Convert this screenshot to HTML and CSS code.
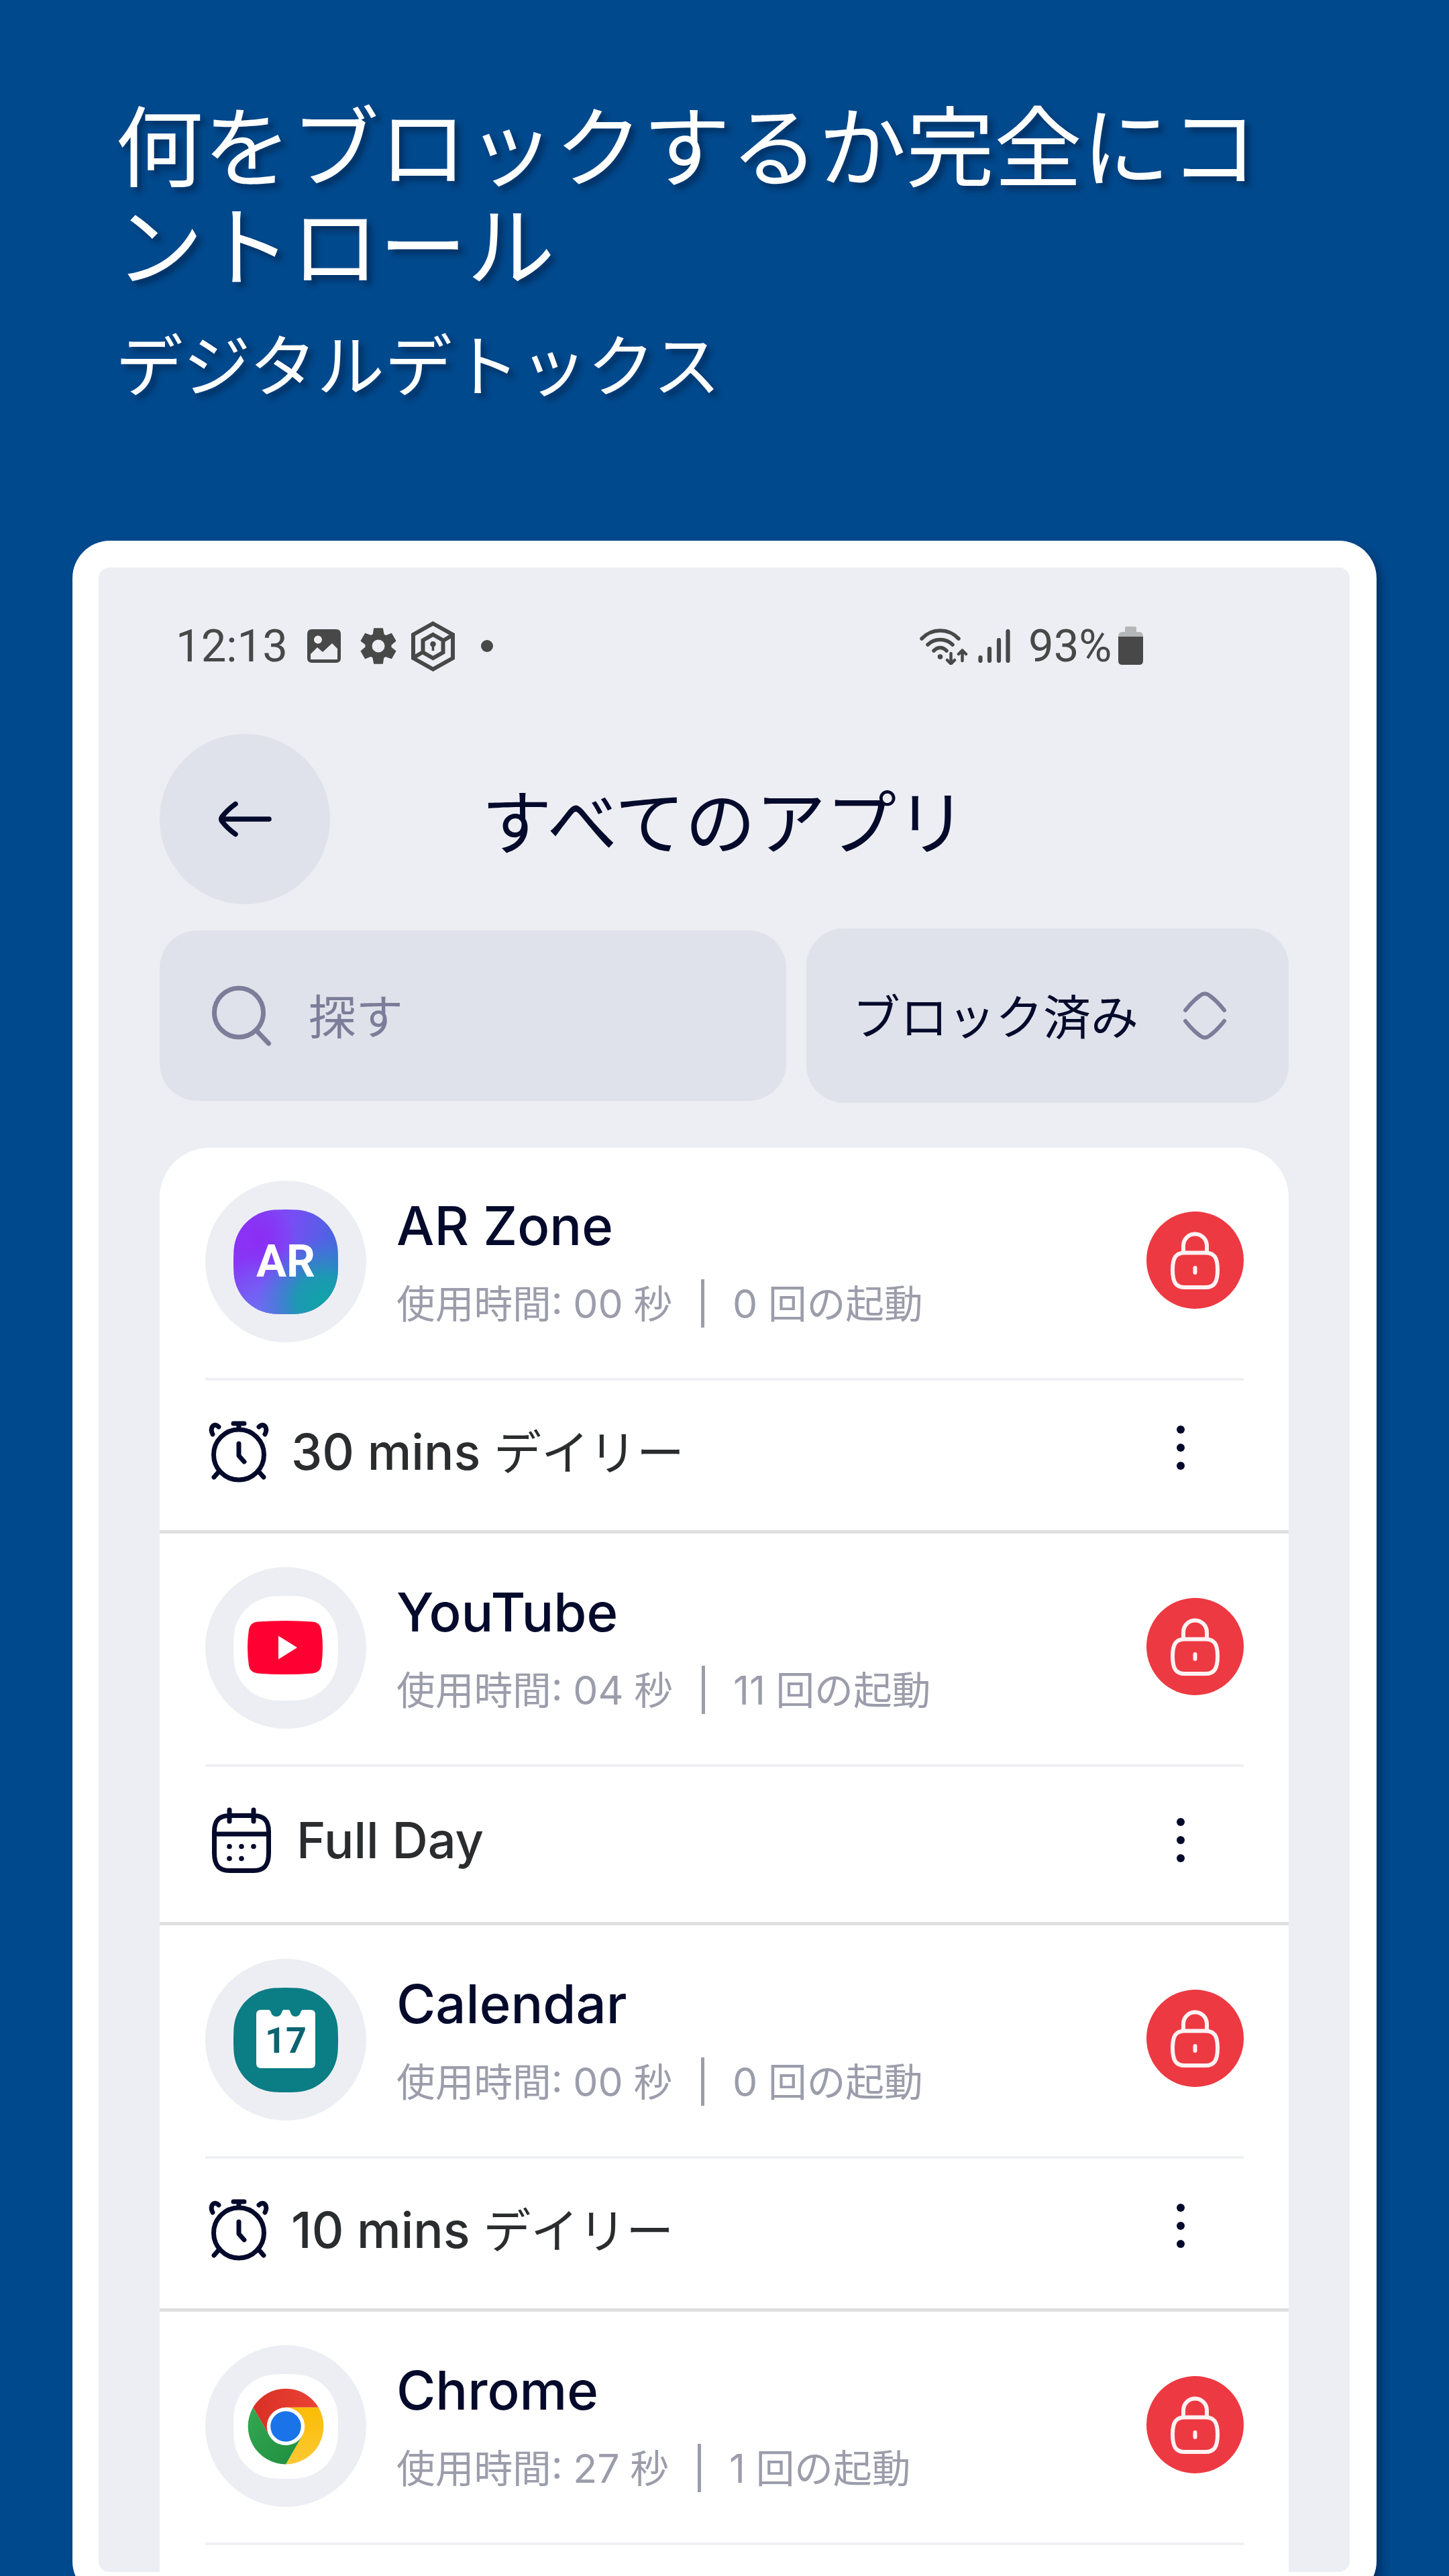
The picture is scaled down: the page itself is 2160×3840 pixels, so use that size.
FILE: index.html
```html
<!DOCTYPE html>
<html lang="ja">
<head>
<meta charset="utf-8">
<title>デジタルデトックス</title>
<link rel="stylesheet" href="styles.css">
</head>
<body>
<svg class="defs" width="0" height="0" aria-hidden="true">
  <symbol id="squircle" viewBox="0 0 156 156"><path d="M60 .500Q78-.500 96 .500C128 3 153 28 155.500 60Q156.500 78 155.500 96C153 128 128 153 96 155.500Q78 156.500 60 155.500C28 153 3 128 .500 96Q-.500 78 .500 60C3 28 28 3 60 .500Z"/></symbol>
  <symbol id="lock" viewBox="0 0 145 145">
    <g fill="none" stroke="#fff2f3" stroke-width="6" stroke-linecap="round">
      <path d="M55 61V51a17.500 17.500 0 0 1 35 0v10"/>
      <path d="M57 61.500h31c13 0 18 7 18 25.500s-5 26-18 26H57c-13 0-18-7.500-18-26s5-25.500 18-25.500Z"/>
      <path d="M72.500 84v7"/>
    </g>
  </symbol>
  <symbol id="alarm" viewBox="0 0 90 92">
    <g fill="none" stroke="#040a2b" stroke-width="7" stroke-linecap="round" stroke-linejoin="round">
      <circle cx="45" cy="50.500" r="37.500"/>
      <path d="M45 34v18l8 9M37 4h16M45 4v8M6 20C1 10 8 2 15 9M84 20c5-10-2-18-9-11M15 76l-7 8M75 76l7 8"/>
    </g>
  </symbol>
  <symbol id="calendar" viewBox="0 0 88 98">
    <g fill="none" stroke="#040a2b" stroke-width="7" stroke-linecap="round">
      <path d="M26 12.500h36c16 0 22.500 8 22.500 24v32c0 18-6.500 26-22.500 26H26c-16 0-22.500-8-22.500-26v-32c0-16 6.500-24 22.500-24ZM3.500 40h81M26 4v17M62 4v17"/>
    </g>
    <g fill="#040a2b"><circle cx="26" cy="58.500" r="3.800"/><circle cx="44" cy="58.500" r="3.800"/><circle cx="62" cy="58.500" r="3.800"/><circle cx="26" cy="76.500" r="3.800"/><circle cx="44" cy="76.500" r="3.800"/></g>
  </symbol>
  <symbol id="more" viewBox="0 0 12 66"><g fill="#040a2b"><circle cx="6" cy="6" r="6"/><circle cx="6" cy="33" r="6"/><circle cx="6" cy="60" r="6"/></g></symbol>
</svg>

<header class="hero">
  <h1 class="hero-title">何をブロックするか完全にコントロール</h1>
  <p class="hero-subtitle">デジタルデトックス</p>
</header>

<main class="phone">
  <div class="screen">
    <div class="status">
      <div class="status-left">
        <span class="clock">12:13</span>
        <svg class="i-photo" width="50" height="50" viewBox="0 0 50 50"><path fill="#484848" fill-rule="evenodd" d="M7 0h36q7 0 7 7v36q0 7-7 7H7q-7 0-7-7V7q0-7 7-7ZM16 9.500a5.800 5.800 0 1 0 0 12 5.800 5.800 0 1 0 0-12ZM5 45h40V29l-8-8-14 13-8-7L5 37Z"/></svg>
        <svg class="i-gear" width="54" height="54" viewBox="-27 -27 54 54"><circle r="14.500" fill="none" stroke="#484848" stroke-width="10"/><g fill="#484848"><path id="tooth" d="M-7-26q0-.8.800-.8H6.200q.8 0 .8.800L9-15-4-12H-9Z"/><use href="#tooth" transform="rotate(60)"/><use href="#tooth" transform="rotate(120)"/><use href="#tooth" transform="rotate(180)"/><use href="#tooth" transform="rotate(240)"/><use href="#tooth" transform="rotate(300)"/></g></svg>
        <svg class="i-hex" width="65" height="75" viewBox="0 0 65 75"><g fill="none" stroke="#484848" stroke-width="6"><path d="M32.500 3.500 62 20v35L32.500 71.500 3 55V20ZM32.500 20 47.500 28.500v18L32.500 55 17.500 46.500v-18ZM61 21 46 30M4 54l15-9"/></g><path fill="#484848" d="M32.500 30a4.200 4.200 0 0 1 1.800 8V44h-3.600v-6a4.200 4.200 0 0 1 1.800-8Z"/></svg>
        <span class="dot"></span>
      </div>
      <div class="status-right">
        <svg class="i-wifi" width="72" height="56" viewBox="0 0 72 56"><g fill="none" stroke="#484848" stroke-width="5.500" stroke-linecap="round"><path d="M3 17C18 1 43 1 58 17M12 26c10-10 27-10 37 0M21 35c6-6 13-6 19 0"/></g><circle cx="30.500" cy="44" r="3.800" fill="#484848"/><path fill="none" stroke="#484848" stroke-width="4.500" stroke-linecap="round" stroke-linejoin="round" d="M46.500 39v15M41 49l5.500 5.500 5.500-5.500M63.500 50V35M58 40l5.500-5.500 5.500 5.500"/></svg>
        <svg class="i-signal" width="48" height="50" viewBox="0 0 48 50"><path stroke="#484848" stroke-width="6.200" stroke-linecap="round" d="M3.500 42v5M17 29v18M31 16v31M44.500 3v44"/></svg>
        <span class="pct">93%</span>
        <svg class="i-battery" width="37" height="57" viewBox="0 0 37 57"><path fill="#b5b6b8" d="M12 0h13q2 0 2 2v6h4q6 0 6 7H0q0-7 6-7h4V2q0-2 2-2Z"/><path fill="#484848" d="M0 15h37v36q0 6-6 6H6q-6 0-6-6Z"/></svg>
      </div>
    </div>

    <div class="topbar">
      <div class="back"><svg width="80" height="54" viewBox="0 0 80 54"><path fill="none" stroke="#040a2b" stroke-width="7.500" stroke-linecap="round" stroke-linejoin="round" d="M76 27H5M26 4.500Q14 13 6 23.500Q3.500 27 6 30.500Q14 41 26 49.500"/></svg></div>
      <h2 class="screen-title">すべてのアプリ</h2>
    </div>

    <div class="filters">
      <div class="search">
        <svg width="90" height="92" viewBox="0 0 90 92"><g fill="none" stroke="#7c7d99" stroke-width="7" stroke-linecap="round"><circle cx="40" cy="41.500" r="36.500"/><path d="M66.500 68.500l18 19"/></g></svg>
        <span>探す</span>
      </div>
      <div class="select">
        <span>ブロック済み</span>
        <svg width="66" height="74" viewBox="0 0 66 74"><path fill="none" stroke="#7c7d99" stroke-width="6" stroke-linecap="round" stroke-linejoin="round" d="M4 29Q15 15 26 7Q33 1.500 40 7Q51 15 62 29M4 45Q15 59 26 67Q33 72.500 40 67Q51 59 62 45"/></svg>
      </div>
    </div>

    <section class="list">
      <article class="item">
        <div class="app">
          <div class="avatar"><div class="tile">
            <svg class="tile-bg" viewBox="0 0 156 156">
              <defs>
                <linearGradient id="arBase" x1="0" y1=".3" x2="1" y2=".45"><stop offset="0" stop-color="#8a35f6"/><stop offset=".5" stop-color="#7a4cf5"/><stop offset="1" stop-color="#4468de"/></linearGradient>
                <radialGradient id="arTeal" cx=".85" cy=".88" r=".62"><stop offset="0" stop-color="#12a3a8"/><stop offset=".4" stop-color="#1a9bb0" stop-opacity=".95"/><stop offset="1" stop-color="#2a8cc8" stop-opacity="0"/></radialGradient>
                <radialGradient id="arBlue" cx=".25" cy="1" r=".55"><stop offset="0" stop-color="#6c70f2"/><stop offset="1" stop-color="#6c70f2" stop-opacity="0"/></radialGradient>
                <radialGradient id="arViolet" cx=".25" cy=".28" r=".35"><stop offset="0" stop-color="#8c2cf4"/><stop offset="1" stop-color="#8c2cf4" stop-opacity="0"/></radialGradient>
              </defs>
              <use href="#squircle" fill="url(#arBase)"/><use href="#squircle" fill="url(#arViolet)"/><use href="#squircle" fill="url(#arBlue)"/><use href="#squircle" fill="url(#arTeal)"/>
            </svg>
            <span class="ar-text">AR</span>
          </div></div>
          <div class="info"><h3>AR Zone</h3><div class="usage"><span><b>使用時間</b>: 00 <b>秒</b></span><i></i><span>0 <b>回の起動</b></span></div></div>
          <div class="lock"><svg width="145" height="145"><use href="#lock"/></svg></div>
        </div>
        <div class="rule"><svg class="i-alarm" width="90" height="92"><use href="#alarm"/></svg><span class="rule-text">30 mins <b>デイリー</b></span><svg class="more" width="12" height="66"><use href="#more"/></svg></div>
      </article>

      <article class="item">
        <div class="app">
          <div class="avatar"><div class="tile">
            <svg class="tile-bg" viewBox="0 0 156 156"><use href="#squircle" fill="#fff"/><path fill="#ff0033" d="M36 38.500Q77 35.500 118 38.500 129 39.500 131 50 135 77 131 104 129 114.500 118 115.500 77 118.500 36 115.500 25 114.500 23 104 19 77 23 50 25 39.500 36 38.500Z"/><path fill="#fff" d="M67 59.500 95 77 67 94.500Z"/></svg>
          </div></div>
          <div class="info"><h3>YouTube</h3><div class="usage"><span><b>使用時間</b>: 04 <b>秒</b></span><i></i><span>11 <b>回の起動</b></span></div></div>
          <div class="lock"><svg width="145" height="145"><use href="#lock"/></svg></div>
        </div>
        <div class="rule rule-day"><svg class="i-day" width="88" height="98"><use href="#calendar"/></svg><span class="rule-text">Full Day</span><svg class="more" width="12" height="66"><use href="#more"/></svg></div>
      </article>

      <article class="item">
        <div class="app">
          <div class="avatar"><div class="tile">
            <svg class="tile-bg" viewBox="0 0 156 156"><use href="#squircle" fill="#0b7d84"/><path fill="#fff" d="M41 33H52Q55 33 56 37 58 43 64 43 70 43 72 37 73 33 75 33H82Q84 33 85 37 87 43 92.500 43 98 43 100 37 101 33 104 33H115Q122 33 122 40V113Q122 120 115 120H41Q34 120 34 113V40Q34 33 41 33Z"/></svg>
            <span class="date-text">17</span>
          </div></div>
          <div class="info"><h3>Calendar</h3><div class="usage"><span><b>使用時間</b>: 00 <b>秒</b></span><i></i><span>0 <b>回の起動</b></span></div></div>
          <div class="lock"><svg width="145" height="145"><use href="#lock"/></svg></div>
        </div>
        <div class="rule"><svg class="i-alarm" width="90" height="92"><use href="#alarm"/></svg><span class="rule-text">10 mins <b>デイリー</b></span><svg class="more" width="12" height="66"><use href="#more"/></svg></div>
      </article>

      <article class="item">
        <div class="app">
          <div class="avatar"><div class="tile">
            <svg class="tile-bg" viewBox="-78 -78 156 156">
              <defs>
                <linearGradient id="cRed"><stop offset="0" stop-color="#d93025"/><stop offset="1" stop-color="#ea4335"/></linearGradient>
                <linearGradient id="cYellow" x1="0" y1="1" x2="0" y2="0"><stop offset="0" stop-color="#fcc934"/><stop offset="1" stop-color="#fbbc04"/></linearGradient>
                <linearGradient id="cGreen" x1="1" y1="1" x2="0" y2="0"><stop offset="0" stop-color="#1e8e3e"/><stop offset="1" stop-color="#34a853"/></linearGradient>
              </defs>
              <use href="#squircle" x="-78" y="-78" width="156" height="156" fill="#fff"/>
              <path fill="url(#cRed)" d="M-48.800-28.200A56.400 56.400 0 0 1 48.800-28.200H0L-24.400 14.100Z"/>
              <path fill="url(#cYellow)" d="M48.800-28.200A56.400 56.400 0 0 1 0 56.400L24.400 14.100 0-28.200Z"/>
              <path fill="url(#cGreen)" d="M0 56.400A56.400 56.400 0 0 1-48.800-28.200L-24.400 14.100 24.400 14.100Z"/>
              <circle r="28.200" fill="#fff"/><circle r="22.800" fill="#1a73e8"/>
            </svg>
          </div></div>
          <div class="info"><h3>Chrome</h3><div class="usage"><span><b>使用時間</b>: 27 <b>秒</b></span><i></i><span>1 <b>回の起動</b></span></div></div>
          <div class="lock"><svg width="145" height="145"><use href="#lock"/></svg></div>
        </div>
      </article>
    </section>
  </div>
</main>
</body>
</html>
```
FILE: styles.css
```css
* { box-sizing: border-box; margin: 0; padding: 0; }
html, body { width: 2160px; height: 3840px; overflow: hidden; }
body { background: #00498c; font-family: Inter, "Noto Sans CJK JP", sans-serif; }
svg { display: block; flex: none; }
.defs { position: absolute; }
b { font-weight: 400; font-family: "Noto Sans CJK JP", sans-serif; }

.hero { height: 806px; padding: 137px 173px 0 172px; color: #fff; font-family: "Noto Sans CJK JP", sans-serif; text-shadow: 7px 7px 9px rgba(0, 20, 50, .45); }
.hero-title { width: 1730px; font-size: 131px; line-height: 148px; font-weight: 400; word-break: break-all; line-break: anywhere; }
.hero-subtitle { margin-top: 32px; font-size: 100.8px; line-height: 148px; }

.phone { width: 1944px; height: 3068px; margin-left: 108px; padding: 40px 40px 40px 39px; background: #fff; border-radius: 56px; box-shadow: 8px 8px 12px rgba(0, 20, 50, .4); }
.screen { height: 2988px; padding: 0 91px; background: #edeef3; border-radius: 16px; overflow: hidden; }

.status { display: flex; justify-content: space-between; align-items: center; height: 234px; padding: 0 217px 0 24px; color: #484848; font: 400 67px/1 Roboto, sans-serif; }
.status-left, .status-right { display: flex; align-items: center; }
.clock { width: 196px; white-space: nowrap; }
.i-gear { margin-left: 29px; }
.i-hex { margin-left: 22px; }
.dot { width: 18px; height: 18px; margin-left: 39px; border-radius: 50%; background: #484848; }
.i-signal { margin: 0 27px 0 15px; }
.pct { width: 134px; white-space: nowrap; }
.i-battery { margin-bottom: 2px; }

.topbar { display: grid; grid-template-columns: 254px 1fr 254px; align-items: center; height: 254px; margin-top: 14px; }
.back { display: flex; align-items: center; justify-content: center; height: 254px; border-radius: 50%; background: #dfe2ea; }
.screen-title { margin-bottom: 5px; text-align: center; color: #040a2b; font: 400 105px/120px "Noto Sans CJK JP", sans-serif; }

.filters { display: flex; align-items: center; justify-content: space-between; height: 260px; margin-top: 36px; font: 400 70.500px/100px "Noto Sans CJK JP", sans-serif; }
.search { display: flex; align-items: center; width: 934px; height: 254px; padding-left: 78px; border-radius: 56px; background: #dfe2ea; color: #7c7d99; }
.search span { margin: 0 0 7px 54px; }
.select { display: flex; align-items: center; justify-content: space-between; width: 719px; height: 260px; padding: 0 92px 0 69px; border-radius: 56px; background: #dfe2ea; color: #040a2b; }
.select span { margin-bottom: 7px; font-size: 71px; white-space: nowrap; }

.list { height: 2200px; margin-top: 67px; border-radius: 74px 74px 0 0; background: #fff; }
.item { border-bottom: 5px solid #dfdfdf; }
.item:last-child { border-bottom: 0; }
.app { display: flex; height: 348px; margin: 0 67px 0 68px; padding-top: 50px; border-bottom: 4px solid #eff0f4; }
.item:first-child .app { height: 347px; padding-top: 49px; }
.avatar { display: flex; align-items: center; justify-content: center; width: 240px; height: 241px; border-radius: 50%; background: #edeef3; }
.tile { display: grid; place-items: center; width: 156px; height: 156px; }
.tile > * { grid-area: 1 / 1; }
.tile-bg { width: 156px; height: 156px; }
.ar-text { color: #fff; font: 700 67px/67px Roboto, sans-serif; }
.date-text { padding-top: 3px; color: #0b6470; font: 700 54px/54px Roboto, sans-serif; }
.info { flex: 1; padding: 17px 0 0 45px; }
.info h3 { color: #040a2b; font-size: 79.600px; line-height: 100px; font-weight: 500; white-space: nowrap; }
.usage { display: flex; height: 72px; margin-top: 30px; color: #9c9dab; font-size: 59px; line-height: 73px; word-spacing: -1px; white-space: nowrap; }
.usage b { font-size: 57.700px; line-height: 1; }
.usage i { width: 5px; height: 72px; margin: 0 42px 0 43px; background: #9c9dab; }
.lock { width: 145px; height: 145px; margin-top: 46px; border-radius: 50%; background: #ed3942; }
.rule { display: flex; align-items: center; height: 223px; padding: 0 155px 12px 73px; }
.rule-text { flex: 1; margin-left: 33px; color: #2a2c2e; font-size: 73.900px; line-height: 94px; font-weight: 500; white-space: nowrap; }
.rule-text b { font-size: 71px; line-height: 1; }
.more { margin-bottom: 11px; }
.rule-day { height: 231px; padding: 0 155px 13px 78px; }
.rule-day .rule-text { margin-left: 38px; }
.rule-day .more { margin-bottom: 0; }
```
